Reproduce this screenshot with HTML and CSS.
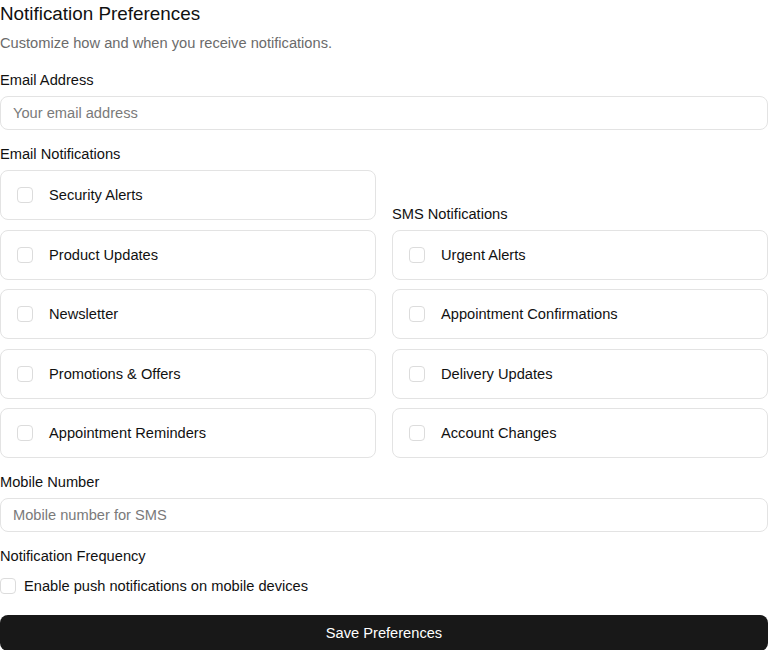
FILE: index.html
```html
<!DOCTYPE html>
<html lang="en">
<head>
<meta charset="utf-8">
<title>Notification Preferences</title>
<link rel="stylesheet" href="styles.css">
</head>
<body>
<div class="page">
  <h2 class="title">Notification Preferences</h2>
  <p class="subtitle">Customize how and when you receive notifications.</p>
  <form class="form">
    <div class="field">
      <label class="label">Email Address</label>
      <input class="input" type="email" placeholder="Your email address">
    </div>
    <div class="columns">
      <div class="col">
        <div class="label">Email Notifications</div>
        <div class="cards">
          <label class="card"><span class="box"></span><span>Security Alerts</span></label>
          <label class="card"><span class="box"></span><span>Product Updates</span></label>
          <label class="card"><span class="box"></span><span>Newsletter</span></label>
          <label class="card"><span class="box"></span><span>Promotions &amp; Offers</span></label>
          <label class="card"><span class="box"></span><span>Appointment Reminders</span></label>
        </div>
      </div>
      <div class="col">
        <div class="label">SMS Notifications</div>
        <div class="cards">
          <label class="card"><span class="box"></span><span>Urgent Alerts</span></label>
          <label class="card"><span class="box"></span><span>Appointment Confirmations</span></label>
          <label class="card"><span class="box"></span><span>Delivery Updates</span></label>
          <label class="card"><span class="box"></span><span>Account Changes</span></label>
        </div>
      </div>
    </div>
    <div class="field">
      <label class="label">Mobile Number</label>
      <input class="input" type="tel" placeholder="Mobile number for SMS">
    </div>
    <div class="field">
      <div class="label">Notification Frequency</div>
      <label class="check-row"><span class="box"></span><span>Enable push notifications on mobile devices</span></label>
    </div>
    <button class="save" type="button">Save Preferences</button>
  </form>
</div>
</body>
</html>
```
FILE: styles.css
```css
* { box-sizing: border-box; }
html, body { margin: 0; padding: 0; background: #ffffff; }
body {
  font-family: "Liberation Sans", Arial, sans-serif;
  color: #111111;
  font-size: 14.65px;
}
.page { width: 768px; }
.title {
  margin: 0;
  font-size: 18.85px;
  line-height: 28px;
  font-weight: 400;
  color: #111111;
}
.subtitle {
  margin: 5px 0 0;
  font-size: 14.65px;
  line-height: 20px;
  color: #6b6b6b;
}
.form {
  margin-top: 17px;
  display: flex;
  flex-direction: column;
  gap: 14px;
}
.field { display: flex; flex-direction: column; gap: 6px; }
.label {
  display: block;
  font-size: 14.65px;
  line-height: 20px;
  color: #111111;
}
.input {
  height: 34px;
  width: 100%;
  border: 1px solid #e3e3e3;
  border-radius: 8px;
  padding: 0 12px;
  font-family: inherit;
  font-size: 14.65px;
  color: #111111;
  background: #ffffff;
  outline: none;
}
.input::placeholder { color: #7a7a7a; }
.columns {
  display: grid;
  grid-template-columns: 1fr 1fr;
  column-gap: 16px;
}
.col {
  display: flex;
  flex-direction: column;
  justify-content: flex-end;
  gap: 6px;
}
.cards { display: flex; flex-direction: column; gap: 9.5px; }
.card {
  height: 50px;
  display: flex;
  align-items: center;
  gap: 16px;
  padding: 0 16px;
  border: 1px solid #e3e3e3;
  border-radius: 8px;
  font-size: 14.65px;
  line-height: 16px;
  color: #111111;
}
.box {
  width: 16px;
  height: 16px;
  flex: none;
  border: 1px solid #dcdcdc;
  border-radius: 4px;
  background: #ffffff;
}
.check-row {
  display: flex;
  align-items: center;
  gap: 8px;
  height: 24px;
  margin-top: 2px;
  font-size: 14.65px;
  color: #111111;
}
.save {
  margin-top: 3px;
  height: 36px;
  width: 100%;
  border: none;
  border-radius: 8px;
  background: #181818;
  color: #ffffff;
  font-family: inherit;
  font-size: 14.65px;
}
```
